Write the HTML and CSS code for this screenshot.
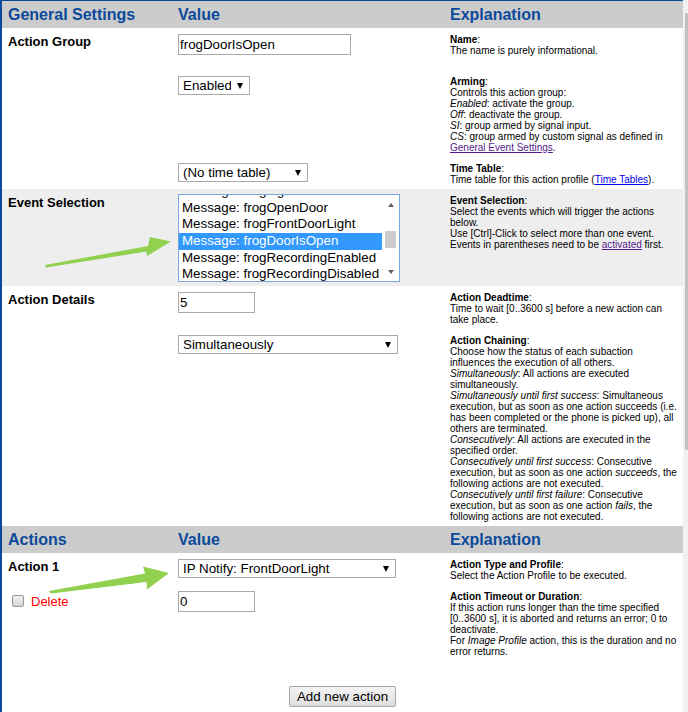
FILE: index.html
```html
<!DOCTYPE html>
<html lang="en">

<head>
  <meta charset="UTF-8">
  <meta name="viewport" content="width=device-width, initial-scale=1.0">
  <title>Action Group Settings</title>
  <link rel="stylesheet" href="styles.css">
</head>

<body>
  <div class="page">
    <table class="settings">
      <colgroup>
        <col class="col-label">
        <col class="col-value">
        <col class="col-expl">
      </colgroup>
      <tr class="head">
        <th>General Settings</th>
        <th>Value</th>
        <th>Explanation</th>
      </tr>
      <tr class="spaced">
        <td class="label">Action Group</td>
        <td><input type="text" class="text wide" value="frogDoorIsOpen"></td>
        <td class="expl"><b>Name</b>:<br>The name is purely informational.</td>
      </tr>
      <tr>
        <td class="label"></td>
        <td><span class="select-wrap"><select class="sel-enabled"><option>Enabled</option></select></span></td>
        <td class="expl"><b>Arming</b>:<br>Controls this action group:<br><i>Enabled</i>: activate the group.<br><i>Off</i>: deactivate the group.<br><i>SI</i>: group armed by signal input.<br><i>CS</i>: group armed by custom signal as defined in <a href="#" class="visited">General Event Settings</a>.</td>
      </tr>
      <tr>
        <td class="label"></td>
        <td><span class="select-wrap"><select class="sel-time"><option>(No time table)</option></select></span></td>
        <td class="expl"><b>Time Table</b>:<br>Time table for this action profile (<a href="#">Time Tables</a>).</td>
      </tr>
      <tr class="shaded">
        <td class="label">Event Selection</td>
        <td class="list-cell">
          <div class="listbox">
            <ul class="options">
              <li>Message: frogLightOn</li>
              <li>Message: frogOpenDoor</li>
              <li>Message: frogFrontDoorLight</li>
              <li class="selected">Message: frogDoorIsOpen</li>
              <li>Message: frogRecordingEnabled</li>
              <li>Message: frogRecordingDisabled</li>
            </ul>
            <div class="lb-scroll">
              <span class="lb-up"></span>
              <span class="lb-track"><span class="lb-thumb"></span></span>
              <span class="lb-down"></span>
            </div>
          </div>
        </td>
        <td class="expl"><b>Event Selection</b>:<br>Select the events which will trigger the actions below.<br>Use [Ctrl]-Click to select more than one event.<br>Events in parentheses need to be <a href="#" class="visited">activated</a> first.</td>
      </tr>
      <tr>
        <td class="label">Action Details</td>
        <td><input type="text" class="text short" value="5"></td>
        <td class="expl"><b>Action Deadtime</b>:<br>Time to wait [0..3600 s] before a new action can take place.</td>
      </tr>
      <tr>
        <td class="label"></td>
        <td><span class="select-wrap"><select class="sel-long"><option>Simultaneously</option></select></span></td>
        <td class="expl"><b>Action Chaining</b>:<br>Choose how the status of each subaction influences the execution of all others.<br><i>Simultaneously</i>: All actions are executed simultaneously.<br><i>Simultaneously until first success</i>: Simultaneous execution, but as soon as one action succeeds (i.e. has been completed or the phone is picked up), all others are terminated.<br><i>Consecutively</i>: All actions are executed in the specified order.<br><i>Consecutively until first success</i>: Consecutive execution, but as soon as one action <i>succeeds</i>, the following actions are not executed.<br><i>Consecutively until first failure</i>: Consecutive execution, but as soon as one action <i>fails</i>, the following actions are not executed.</td>
      </tr>
      <tr class="head">
        <th>Actions</th>
        <th>Value</th>
        <th>Explanation</th>
      </tr>
      <tr>
        <td class="label">Action 1</td>
        <td><span class="select-wrap"><select class="sel-action"><option>IP Notify: FrontDoorLight</option></select></span></td>
        <td class="expl"><b>Action Type and Profile</b>:<br>Select the Action Profile to be executed.</td>
      </tr>
      <tr>
        <td>
          <label class="delete"><input type="checkbox" class="check"><span>Delete</span></label>
        </td>
        <td><input type="text" class="text short" value="0"></td>
        <td class="expl"><b>Action Timeout or Duration</b>:<br>If this action runs longer than the time specified [0..3600 s], it is aborted and returns an error; 0 to deactivate.<br>For <i>Image Profile</i> action, this is the duration and no error returns.</td>
      </tr>
    </table>
    <div class="footer">
      <button type="button" class="btn">Add new action</button>
    </div>
  </div>
  <div class="page-scroll">
    <div class="page-thumb"></div>
  </div>

  <!-- annotation arrows drawn over the screenshot -->
  <svg class="arrows" width="688" height="712" viewBox="0 0 688 712">
    <polygon points="45,265 148,246 150,237 171,241.5 147,256 146.5,251.5 46,267.5" />
    <polygon points="49,591 145,573.5 143,566.5 169,573 147,589.5 146.5,582 51,593.5" />
  </svg>
</body>

</html>
```

FILE: styles.css
```css
* {
  box-sizing: border-box;
  margin: 0;
  padding: 0;
}

body {
  font-family: "Liberation Sans", Arial, sans-serif;
  color: #000;
  background-color: #fff;
  display: flex;
  height: 712px;
  overflow: hidden;
  position: relative;
}

.page {
  width: 683px;
  border-left: 2px solid #0b4a9b;
  border-top: 1px solid #0b4a9b;
}

.settings {
  width: 681px;
  border-collapse: collapse;
  table-layout: fixed;
}

.col-label {
  width: 170px;
}

.col-value {
  width: 272px;
}

.col-expl {
  width: 239px;
}

.settings th {
  background-color: #cccccc;
  color: #0b4a9b;
  font-size: 16px;
  line-height: 19px;
  text-align: left;
  padding: 4px 6px;
}

.settings td {
  vertical-align: top;
  padding: 6px 6px 4px;
  font-size: 13px;
  line-height: 15px;
}

.settings tr.spaced td {
  padding-bottom: 14px;
}

.settings tr.shaded td {
  background-color: #eeeeee;
}

.settings td.label {
  font-weight: bold;
}

.settings td.expl {
  font-size: 10px;
  line-height: 11px;
  padding-right: 3px;
}

.settings td.list-cell {
  padding-top: 5px;
}

.expl a {
  color: #0000ee;
}

.expl a.visited {
  color: #551a8b;
}

/* form controls */

.text {
  display: block;
  height: 21px;
  border: 1px solid #a9a9a9;
  padding: 0 1px;
  font-family: inherit;
  font-size: 13.33px;
  color: #000;
}

.text.wide {
  width: 173px;
}

.text.short {
  width: 77px;
}

.select-wrap {
  position: relative;
  display: inline-block;
  vertical-align: top;
}

.select-wrap::after {
  content: "";
  position: absolute;
  right: 7px;
  top: 50%;
  margin-top: -3px;
  border-left: 3.5px solid transparent;
  border-right: 3.5px solid transparent;
  border-top: 6px solid #000;
}

.select-wrap select {
  -webkit-appearance: none;
  appearance: none;
  display: block;
  height: 19px;
  border: 1px solid #a9a9a9;
  border-radius: 0;
  background-color: #fff;
  padding: 0 18px 0 4px;
  font-family: inherit;
  font-size: 13.33px;
  color: #000;
}

.sel-enabled {
  width: 72px;
}

.sel-time {
  width: 130px;
}

.sel-long {
  width: 220px;
}

.sel-action {
  width: 218px;
}

/* event list box */

.listbox {
  display: flex;
  width: 222px;
  height: 88px;
  border: 1px solid #7aa7dd;
  background-color: #fff;
  overflow: hidden;
}

.options {
  flex: 1;
  min-width: 0;
  list-style: none;
  margin-top: -12px;
}

.options li {
  height: 16.67px;
  line-height: 16.67px;
  padding: 0 3px;
  font-size: 13.33px;
  white-space: nowrap;
  overflow: hidden;
}

.options li.selected {
  background-color: #3399ff;
  color: #fff;
}

.lb-scroll {
  width: 17px;
  display: flex;
  flex-direction: column;
  align-items: center;
  background-color: #fff;
}

.lb-up,
.lb-down {
  height: 17px;
  width: 17px;
  display: flex;
  align-items: center;
  justify-content: center;
}

.lb-up::before {
  content: "";
  border-left: 3.5px solid transparent;
  border-right: 3.5px solid transparent;
  border-bottom: 4px solid #606060;
  margin-top: 3px;
}

.lb-down::before {
  content: "";
  border-left: 3.5px solid transparent;
  border-right: 3.5px solid transparent;
  border-top: 4px solid #606060;
  margin-bottom: 2px;
}

.lb-track {
  flex: 1;
  width: 17px;
  display: flex;
  justify-content: center;
}

.lb-thumb {
  width: 11px;
  height: 17px;
  margin-top: 19px;
  background-color: #cdcdcd;
}

/* delete checkbox */

.delete {
  display: flex;
  align-items: center;
  gap: 7px;
  height: 20px;
  color: #ff0000;
  font-size: 13px;
}

.check {
  -webkit-appearance: none;
  appearance: none;
  width: 12px;
  height: 12px;
  margin-left: 4px;
  border: 1px solid #9a9a9a;
  border-radius: 2px;
  background: linear-gradient(#f0f0f0, #d6d6d6);
}

.footer {
  text-align: center;
  padding-top: 25px;
}

.btn {
  height: 21px;
  padding: 0 7px;
  font-family: inherit;
  font-size: 13.33px;
  color: #000;
  border: 1px solid #a6a6a6;
  border-radius: 2px;
  background: linear-gradient(#f4f4f4, #dedede);
}

/* window scrollbar on the right */

.page-scroll {
  width: 5px;
  background-color: #f1f1f1;
}

.page-thumb {
  margin: 13px 0 0 2px;
  height: 437px;
  background-color: #c1c1c1;
}

.arrows {
  position: absolute;
  top: 0;
  left: 0;
  pointer-events: none;
  fill: #92d050;
}
```
